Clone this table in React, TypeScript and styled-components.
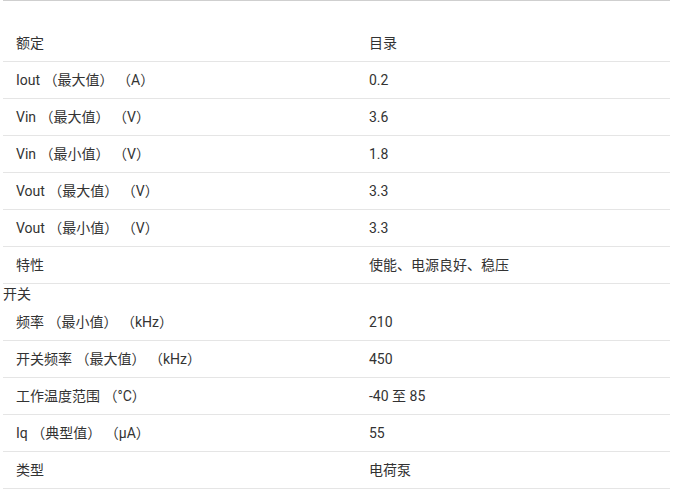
import { createGlobalStyle } from "styled-components";
import styled from "styled-components";

interface SpecRow {
    label: string;
    value: string;
}

interface SpecGroup {
    title?: string;
    rows: SpecRow[];
}

const groups: SpecGroup[] = [
    {
        rows: [
            { label: "Iout （最大值） （A）", value: "0.2" },
            { label: "Vin （最大值） （V）", value: "3.6" },
            { label: "Vin （最小值） （V）", value: "1.8" },
            { label: "Vout （最大值） （V）", value: "3.3" },
            { label: "Vout （最小值） （V）", value: "3.3" },
            { label: "特性", value: "使能、电源良好、稳压" },
        ],
    },
    {
        title: "开关",
        rows: [
            { label: "频率 （最小值） （kHz）", value: "210" },
            { label: "开关频率 （最大值） （kHz）", value: "450" },
            { label: "工作温度范围 （°C）", value: "-40 至 85" },
            { label: "Iq （典型值） （μA）", value: "55" },
            { label: "类型", value: "电荷泵" },
        ],
    },
];

const GlobalStyle = createGlobalStyle`
    body {
        margin: 0;
        background: #fff;
        font-family: Roboto, "Noto Sans CJK SC", sans-serif;
        color: #333;
    }
`;

const Wrapper = styled.div`
    width: 677px;
    padding: 0 7px 0 3px;
    box-sizing: border-box;
`;

const Table = styled.table`
    width: 100%;
    border-collapse: collapse;
    border-top: 1px solid #cfcfcf;
    font-size: 14px;
    line-height: 20px;
`;

const HeadCell = styled.th<{ $first?: boolean }>`
    text-align: left;
    font-weight: 400;
    padding: 32px 13px 8px;
    width: ${({ $first }) => ($first ? "327px" : "auto")};
    border-bottom: 1px solid #e5e5e5;
`;

const Row = styled.tr`
    border-bottom: 1px solid #e5e5e5;
`;

const Cell = styled.td<{ $first?: boolean }>`
    padding: 8px 13px;
    width: ${({ $first }) => ($first ? "327px" : "auto")};
    white-space: nowrap;
`;

const GroupTitle = styled.td`
    padding: 0;
    height: 20px;
    line-height: 20px;
`;

export default function App() {
    return (
        <>
            <GlobalStyle />
            <Wrapper>
                <Table>
                    <thead>
                        <tr>
                            <HeadCell $first>额定</HeadCell>
                            <HeadCell>目录</HeadCell>
                        </tr>
                    </thead>
                    <tbody>
                        {groups.map((group, gi) => [
                            group.title && (
                                <tr key={`t${gi}`}>
                                    <GroupTitle colSpan={2}>{group.title}</GroupTitle>
                                </tr>
                            ),
                            ...group.rows.map((row, ri) => (
                                <Row key={`${gi}-${ri}`}>
                                    <Cell $first>{row.label}</Cell>
                                    <Cell>{row.value}</Cell>
                                </Row>
                            )),
                        ])}
                    </tbody>
                </Table>
            </Wrapper>
        </>
    );
}
